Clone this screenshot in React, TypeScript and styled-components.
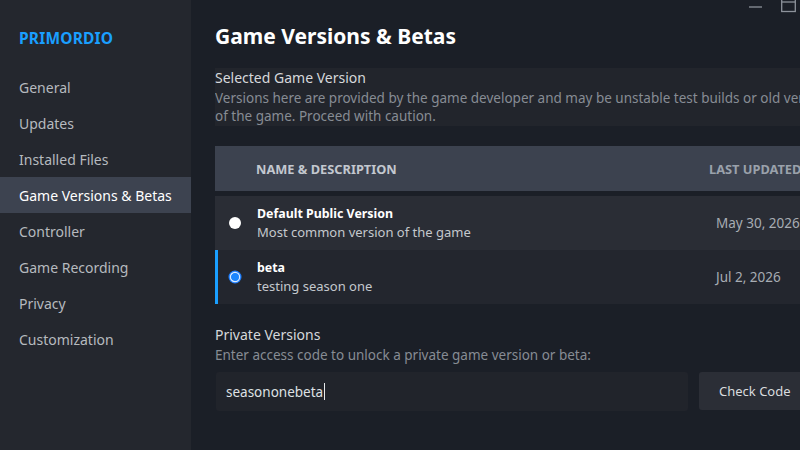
import React from "react";
import styled, { createGlobalStyle } from "styled-components";

const GlobalStyle = createGlobalStyle`
  html, body {
    margin: 0;
    padding: 0;
    background: #1b1f27;
    overflow: hidden;
  }
  * { box-sizing: border-box; }
  body {
    font-family: "Noto Sans", "Open Sans", sans-serif;
  }
`;

const Page = styled.div`
  display: flex;
  width: 800px;
  height: 450px;
  overflow: hidden;
  background: #1b1f27;
  position: relative;
`;

const Sidebar = styled.nav`
  flex: 0 0 191px;
  background: #24272e;
  display: flex;
  flex-direction: column;
  padding-top: 27px;
`;

const GameName = styled.div`
  color: #1a9fff;
  font-weight: 700;
  font-size: 15.5px;
  padding-left: 19px;
  margin-bottom: 20px;
  letter-spacing: 0.2px;
`;

const NavItem = styled.div<{ $active?: boolean }>`
  height: 36px;
  display: flex;
  align-items: center;
  padding-left: 19px;
  font-size: 14px;
  color: ${(p) => (p.$active ? "#ffffff" : "#b6babf")};
  background: ${(p) => (p.$active ? "#3d4350" : "transparent")};
`;

const Main = styled.main`
  flex: 0 0 auto;
  width: 640px;
  padding: 20px 0 0 24px;
  display: flex;
  flex-direction: column;
`;

const Title = styled.h1`
  margin: 0 0 16px;
  color: #ffffff;
  font-size: 21px;
  font-weight: 700;
  line-height: 32px;
`;

const InfoBox = styled.section`
  background: #22252c;
  padding: 1px 0 1px;
  margin-bottom: 20px;
  width: 600px;
  overflow: hidden;
`;

const SectionLabel = styled.div`
  color: #d6d8db;
  font-size: 14px;
  line-height: 18px;
`;

const Hint = styled.div`
  color: #878c94;
  font-size: 13.5px;
  line-height: 18px;
  margin-top: 2px;
  white-space: nowrap;
`;

const Table = styled.div`
  display: flex;
  flex-direction: column;
  width: 600px;
`;

const HeaderRow = styled.div`
  height: 45px;
  background: #3c424f;
  display: flex;
  align-items: center;
  padding-left: 41px;
  margin-bottom: 5px;
  font-size: 12.8px;
  font-weight: 700;
  text-transform: uppercase;
`;

const HeadName = styled.div`
  flex: 1;
  color: #c3c8cf;
`;

const HeadDate = styled.div`
  color: #9aa1ab;
  width: 106px;
  white-space: nowrap;
`;

const VersionRow = styled.div<{ $selected?: boolean }>`
  height: 54px;
  display: flex;
  align-items: center;
  background: ${(p) => (p.$selected ? "#23262e" : "#2a2d35")};
  border-left: 3px solid ${(p) => (p.$selected ? "#1a9fff" : "transparent")};
  padding-left: 10px;
`;

const RadioWrap = styled.div`
  width: 29px;
  display: flex;
  align-items: center;
`;

const VersionText = styled.div`
  flex: 1;
  display: flex;
  flex-direction: column;
  gap: 1px;
`;

const VersionName = styled.div`
  color: #ffffff;
  font-size: 12.4px;
  font-weight: 700;
  line-height: 17px;
`;

const VersionDesc = styled.div`
  color: #c4c8cd;
  font-size: 13px;
  line-height: 18px;
`;

const VersionDate = styled.div`
  color: #a7acb3;
  font-size: 13.5px;
  width: 99px;
  white-space: nowrap;
`;

const PrivateBlock = styled.section`
  margin-top: 22px;
  display: flex;
  flex-direction: column;
`;

const CodeRow = styled.div`
  display: flex;
  gap: 11px;
  margin-top: 8px;
`;

const CodeInput = styled.div`
  flex: 0 0 472px;
  height: 39px;
  margin-left: 1px;
  background: #21242b;
  border-radius: 3px;
  display: flex;
  align-items: center;
  padding-left: 10px;
  color: #dfe1e4;
  font-size: 13.5px;
`;

const Caret = styled.span`
  display: inline-block;
  width: 1px;
  height: 17px;
  background: #e6e8ea;
  margin-left: 1px;
`;

const CheckButton = styled.div`
  flex: 0 0 120px;
  height: 38px;
  background: #2b2e36;
  border-radius: 3px;
  display: flex;
  align-items: center;
  padding-left: 20px;
  color: #d9dcdf;
  font-size: 13px;
`;

const WindowControls = styled.div`
  position: absolute;
  top: 0;
  right: 4px;
  display: flex;
  gap: 18px;
  align-items: flex-start;
`;

const Radio = ({ checked }: { checked?: boolean }) =>
  checked ? (
    <svg width="14" height="14" viewBox="0 0 14 14">
      <circle cx="7" cy="7" r="6.5" fill="#1f7fff" />
      <circle cx="7" cy="7" r="4.6" fill="none" stroke="#d8ebff" strokeWidth="1.3" />
      <circle cx="7" cy="7" r="3.6" fill="#1a86ff" />
    </svg>
  ) : (
    <svg width="14" height="14" viewBox="0 0 14 14">
      <circle cx="7" cy="7" r="6" fill="#ffffff" />
    </svg>
  );

const navItems = [
  "General",
  "Updates",
  "Installed Files",
  "Game Versions & Betas",
  "Controller",
  "Game Recording",
  "Privacy",
  "Customization",
];

const versions = [
  { name: "Default Public Version", desc: "Most common version of the game", date: "May 30, 2026", selected: false },
  { name: "beta", desc: "testing season one", date: "Jul 2, 2026", selected: true },
];

export default function App() {
  return (
    <Page>
      <GlobalStyle />
      <Sidebar>
        <GameName>PRIMORDIO</GameName>
        {navItems.map((item) => (
          <NavItem key={item} $active={item === "Game Versions & Betas"}>
            {item}
          </NavItem>
        ))}
      </Sidebar>

      <Main>
        <Title>Game Versions &amp; Betas</Title>

        <InfoBox>
          <SectionLabel>Selected Game Version</SectionLabel>
          <Hint>
            Versions here are provided by the game developer and may be unstable test builds or old versions
            <br />
            of the game. Proceed with caution.
          </Hint>
        </InfoBox>

        <Table>
          <HeaderRow>
            <HeadName>Name &amp; Description</HeadName>
            <HeadDate>Last Updated</HeadDate>
          </HeaderRow>
          {versions.map((v) => (
            <VersionRow key={v.name} $selected={v.selected}>
              <RadioWrap>
                <Radio checked={v.selected} />
              </RadioWrap>
              <VersionText>
                <VersionName>{v.name}</VersionName>
                <VersionDesc>{v.desc}</VersionDesc>
              </VersionText>
              <VersionDate>{v.date}</VersionDate>
            </VersionRow>
          ))}
        </Table>

        <PrivateBlock>
          <SectionLabel>Private Versions</SectionLabel>
          <Hint>Enter access code to unlock a private game version or beta:</Hint>
          <CodeRow>
            <CodeInput>
              seasononebeta
              <Caret />
            </CodeInput>
            <CheckButton>Check Code</CheckButton>
          </CodeRow>
        </PrivateBlock>
      </Main>

      <WindowControls>
        <svg width="14" height="10" viewBox="0 0 14 10">
          <line x1="0" y1="7" x2="13" y2="7" stroke="#8d929b" strokeWidth="1.3" />
        </svg>
        <svg width="15" height="13" viewBox="0 0 15 13">
          <rect x="0.7" y="-1" width="13.6" height="12.5" fill="none" stroke="#8d929b" strokeWidth="1.3" />
          <line x1="0.7" y1="2" x2="14.3" y2="2" stroke="#8d929b" strokeWidth="1.3" />
        </svg>
      </WindowControls>
    </Page>
  );
}
